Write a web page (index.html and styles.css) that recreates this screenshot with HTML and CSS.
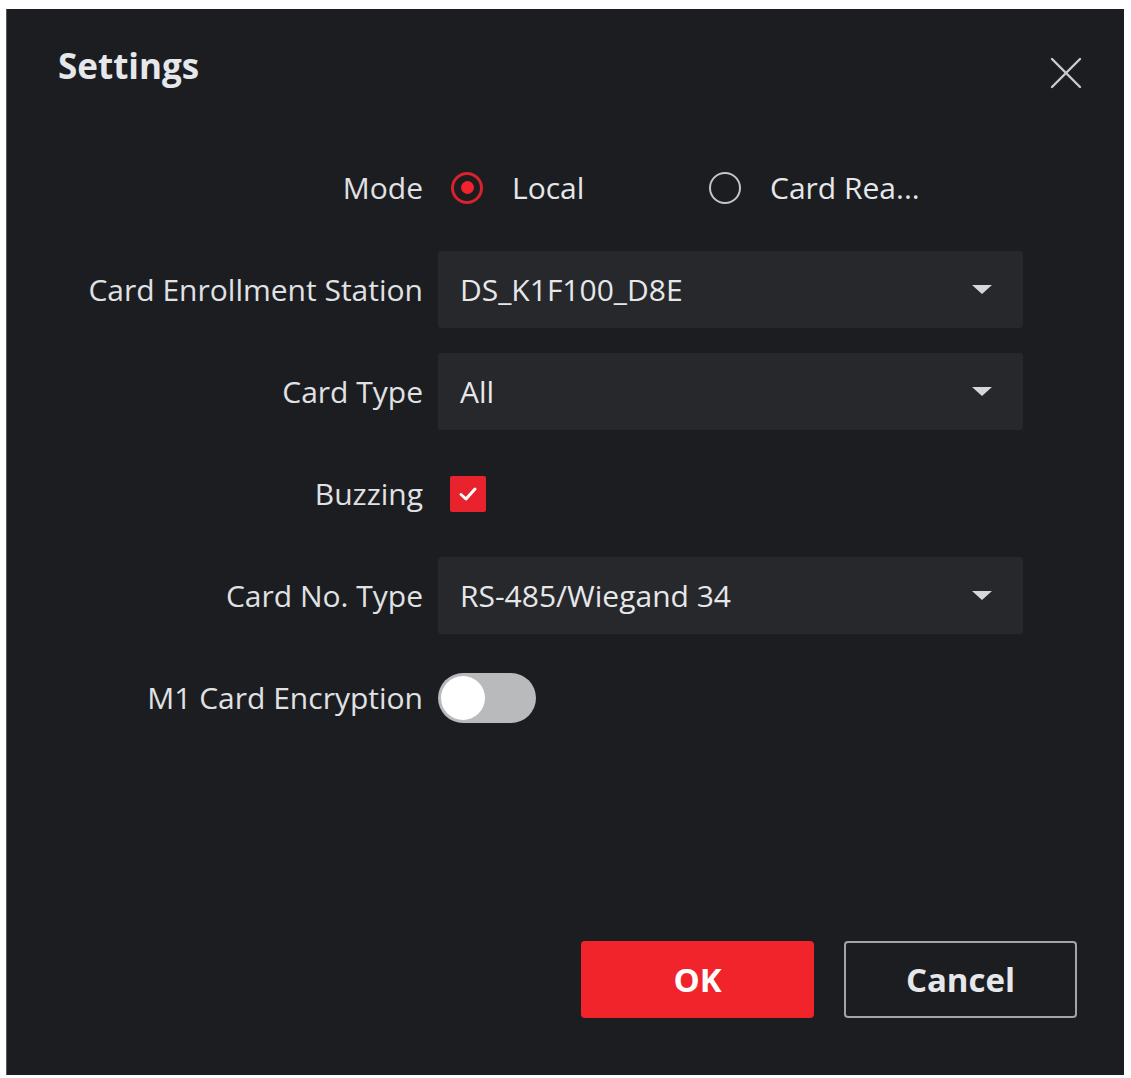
FILE: index.html
```html
<!DOCTYPE html>
<html>
<head>
<meta charset="utf-8">
<link rel="stylesheet" href="styles.css">
</head>
<body>
<div class="dialog">
  <div class="header">
    <div class="title">Settings</div>
    <button class="close" aria-label="Close">
      <svg width="32" height="32" viewBox="0 0 32 32"><path d="M2 2 L30 30 M30 2 L2 30" stroke="#c9cacc" stroke-width="2.4" fill="none" stroke-linecap="round"/></svg>
    </button>
  </div>
  <div class="form">
    <div class="label">Mode</div>
    <div class="control radios">
      <label class="radio checked"><span class="dot"></span><span class="rtext">Local</span></label>
      <label class="radio"><span class="dot"></span><span class="rtext">Card Rea...</span></label>
    </div>

    <div class="label">Card Enrollment Station</div>
    <div class="control select"><span>DS_K1F100_D8E</span><span class="caret"></span></div>

    <div class="label">Card Type</div>
    <div class="control select"><span>All</span><span class="caret"></span></div>

    <div class="label">Buzzing</div>
    <div class="control">
      <span class="checkbox">
        <svg width="24" height="24" viewBox="0 0 24 24"><path d="M5 12.5 L10 17 L19 7" stroke="#fff" stroke-width="3" fill="none" stroke-linecap="round" stroke-linejoin="round"/></svg>
      </span>
    </div>

    <div class="label">Card No. Type</div>
    <div class="control select"><span>RS-485/Wiegand 34</span><span class="caret"></span></div>

    <div class="label">M1 Card Encryption</div>
    <div class="control"><span class="toggle"><span class="knob"></span></span></div>
  </div>
  <div class="footer">
    <button class="btn ok">OK</button>
    <button class="btn cancel">Cancel</button>
  </div>
</div>
</body>
</html>
```

FILE: styles.css
```css
html, body {
  margin: 0;
  padding: 0;
  background: #ffffff;
}
body {
  font-family: "Open Sans", "Noto Sans", sans-serif;
  color: #e4e5e7;
}
.dialog {
  margin: 9px 7px 3px 6px;
  width: 1118px;
  height: 1066px;
  background: #1b1d21;
  border-left: 1px solid #55575a;
  box-sizing: border-box;
  display: flex;
  flex-direction: column;
}
.header {
  height: 140px;
  display: flex;
  justify-content: space-between;
  align-items: flex-start;
  padding: 33px 42px 0 51px;
  box-sizing: border-box;
}
.title {
  font-size: 35px;
  font-weight: 700;
  color: #e6e7ea;
  line-height: 48px;
}
.close {
  background: none;
  border: none;
  padding: 0;
  margin-top: 15px;
  width: 32px;
  height: 32px;
  cursor: pointer;
}
.form {
  display: grid;
  grid-template-columns: 416px 585px;
  grid-auto-rows: 77px;
  column-gap: 15px;
  row-gap: 25px;
}
.label {
  text-align: right;
  font-size: 30px;
  color: #e0e1e4;
  align-self: center;
  white-space: nowrap;
}
.control {
  display: flex;
  align-items: center;
  font-size: 30px;
  color: #e6e7e9;
}
.radios {
  gap: 0;
}
.radio {
  display: flex;
  align-items: center;
  width: 258px;
}
.radio .dot {
  width: 32px;
  height: 32px;
  border-radius: 50%;
  border: 2px solid #c4c5c8;
  box-sizing: border-box;
  margin-left: 13px;
  margin-right: 29px;
  position: relative;
  flex: none;
}
.radio.checked .dot {
  border: 3px solid #d9222c;
}
.radio.checked .dot::after {
  content: "";
  position: absolute;
  left: 50%;
  top: 50%;
  width: 13px;
  height: 13px;
  margin: -6.5px 0 0 -6.5px;
  border-radius: 50%;
  background: #f2232c;
}
.select {
  background: #26282c;
  border-radius: 3px;
  justify-content: space-between;
  padding: 0 31px 0 22px;
  box-sizing: border-box;
}
.caret {
  width: 0;
  height: 0;
  border-left: 10px solid transparent;
  border-right: 10px solid transparent;
  border-top: 9px solid #d6d7da;
}
.checkbox {
  width: 36px;
  height: 36px;
  background: #e8232d;
  border-radius: 2px;
  margin-left: 12px;
  display: flex;
  align-items: center;
  justify-content: center;
}
.toggle {
  width: 98px;
  height: 50px;
  border-radius: 25px;
  background: #b9babc;
  position: relative;
  display: flex;
  align-items: center;
  padding: 3px;
  box-sizing: border-box;
}
.knob {
  width: 44px;
  height: 44px;
  border-radius: 50%;
  background: #ffffff;
}
.footer {
  margin-top: auto;
  display: flex;
  justify-content: flex-end;
  gap: 30px;
  padding: 0 47px 57px 0;
}
.btn {
  width: 233px;
  height: 77px;
  font-family: "Open Sans", "Noto Sans", sans-serif;
  font-size: 33px;
  font-weight: 700;
  border-radius: 4px;
  cursor: pointer;
}
.ok {
  background: #f1232b;
  color: #ffffff;
  border: none;
}
.cancel {
  background: #1b1d21;
  color: #e6e7ea;
  border: 2px solid #a3a4a7;
}
```
